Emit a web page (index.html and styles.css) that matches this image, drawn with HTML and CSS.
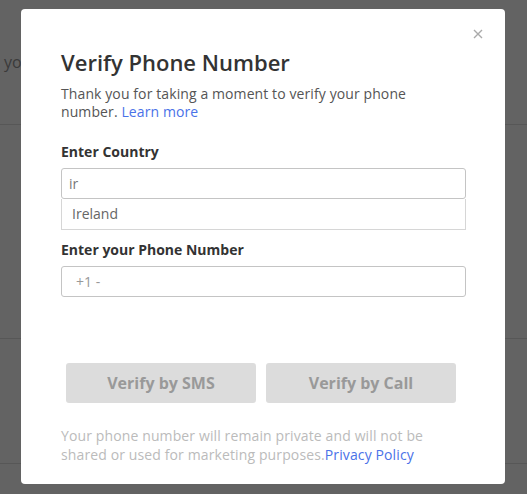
FILE: index.html
```html
<!DOCTYPE html>
<html lang="en">
<head>
  <meta charset="UTF-8">
  <title>Verify Phone Number</title>
  <link rel="stylesheet" href="styles.css">
</head>
<body>
  <div class="page">
    <div class="page-row"><span class="page-text">you</span></div>
    <div class="page-row tall"></div>
    <div class="page-row"></div>
  </div>

  <div class="overlay">
    <div class="modal">
      <button class="close-btn" aria-label="Close">
        <svg width="10" height="10" viewBox="0 0 10 10"><path d="M1 1L9 9M9 1L1 9" stroke="#aaa" stroke-width="1.4"/></svg>
      </button>
      <h2 class="title">Verify Phone Number</h2>
      <p class="intro">Thank you for taking a moment to verify your phone number. <a href="#">Learn more</a></p>

      <label class="field-label">Enter Country</label>
      <div class="country">
        <input type="text" class="text-input" value="ir">
        <ul class="suggestions">
          <li>Ireland</li>
        </ul>
      </div>

      <label class="field-label second">Enter your Phone Number</label>
      <input type="text" class="text-input phone" placeholder="+1 -">

      <div class="actions">
        <button class="verify-btn" disabled>Verify by SMS</button>
        <button class="verify-btn" disabled>Verify by Call</button>
      </div>

      <p class="note">Your phone number will remain private and will not be shared or used for marketing purposes.<a href="#">Privacy Policy</a></p>
    </div>
  </div>
</body>
</html>
```

FILE: styles.css
```css
body {
  margin: 0;
  font-family: "Open Sans", Arial, sans-serif;
  background: #636363;
  height: 494px;
  overflow: hidden;
}

.page-row {
  height: 124px;
  border-bottom: 1px solid #575757;
  display: flex;
  align-items: center;
}

.page-row.tall {
  height: 213px;
}

.page-text {
  margin-left: 4px;
  font-size: 16px;
  color: #3a3a3a;
}

.overlay {
  position: absolute;
  top: 0;
  left: 0;
  right: 0;
  bottom: 0;
  padding-top: 9px;
  padding-left: 21px;
}

.modal {
  position: relative;
  box-sizing: border-box;
  width: 484px;
  height: 475px;
  background: #fff;
  border-radius: 4px;
  padding: 38px 39px 0 40px;
}

.close-btn {
  position: absolute;
  top: 18px;
  right: 22px;
  border: none;
  background: none;
  padding: 0;
  cursor: pointer;
}

.title {
  margin: 0;
  font-size: 22px;
  line-height: 30px;
  font-weight: 600;
  color: #333;
}

.intro {
  margin: 8px 0 0;
  max-width: 385px;
  font-size: 14px;
  line-height: 18px;
  letter-spacing: 0.1px;
  color: #555;
}

a {
  color: #4a72e8;
  text-decoration: none;
}

.field-label {
  display: block;
  margin-top: 22px;
  margin-bottom: 7px;
  font-size: 14px;
  line-height: 18px;
  font-weight: 700;
  color: #333;
}

.field-label.second {
  margin-top: 11px;
}

.text-input {
  box-sizing: border-box;
  width: 100%;
  height: 31px;
  border: 1px solid #c4c4c4;
  border-radius: 3px;
  padding: 0 7px;
  font-family: inherit;
  font-size: 14px;
  color: #777;
  outline: none;
}

.text-input::placeholder {
  color: #999;
}

.text-input.phone {
  padding-left: 14px;
}

.suggestions {
  list-style: none;
  margin: 0;
  padding: 0;
  border: 1px solid #d6d6d6;
  border-top: none;
}

.suggestions li {
  height: 30px;
  line-height: 29px;
  padding-left: 10px;
  font-size: 14px;
  color: #666;
}

.actions {
  display: flex;
  gap: 10px;
  margin: 66px 10px 0 5px;
}

.verify-btn {
  flex: 1;
  height: 40px;
  border: none;
  border-radius: 3px;
  background: #dcdcdc;
  color: #999;
  font-family: inherit;
  font-size: 16px;
  font-weight: 700;
}

.note {
  margin: 23px 0 0;
  max-width: 400px;
  font-size: 14px;
  line-height: 19px;
  letter-spacing: 0.12px;
  color: #bbb;
}
```
